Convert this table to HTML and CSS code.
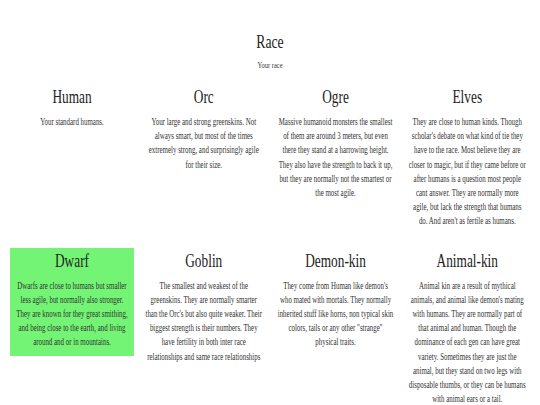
FILE: index.html
```html
<!DOCTYPE html>
<html>
<head>
<meta charset="utf-8">
<link rel="stylesheet" href="styles.css">
</head>
<body>
<div class="frame">
<div class="page">
  <header class="head">
    <h1 class="title">Race</h1>
    <p class="subtitle">Your race</p>
  </header>
  <section class="grid">
    <div class="card">
      <h2 class="name">Human</h2>
      <p class="desc">Your standard humans.</p>
    </div>
    <div class="card">
      <h2 class="name">Orc</h2>
      <p class="desc">Your large and strong greenskins. Not always smart, but most of the times extremely strong, and surprisingly agile for their size.</p>
    </div>
    <div class="card">
      <h2 class="name">Ogre</h2>
      <p class="desc">Massive humanoid monsters the smallest of them are around 3 meters, but even there they stand at a harrowing height. They also have the strength to back it up, but they are normally not the smartest or the most agile.</p>
    </div>
    <div class="card">
      <h2 class="name">Elves</h2>
      <p class="desc">They are close to human kinds. Though scholar's debate on what kind of tie they have to the race. Most believe they are closer to magic, but if they came before or after humans is a question most people cant answer. They are normally more agile, but lack the strength that humans do. And aren't as fertile as humans.</p>
    </div>
    <div class="card selected">
      <h2 class="name">Dwarf</h2>
      <p class="desc">Dwarfs are close to humans but smaller less agile, but normally also stronger. They are known for they great smithing, and being close to the earth, and living around and or in mountains.</p>
    </div>
    <div class="card">
      <h2 class="name">Goblin</h2>
      <p class="desc">The smallest and weakest of the greenskins. They are normally smarter than the Orc's but also quite weaker. Their biggest strength is their numbers. They have fertility in both inter race relationships and same race relationships</p>
    </div>
    <div class="card">
      <h2 class="name">Demon-kin</h2>
      <p class="desc">They come from Human like demon's who mated with mortals. They normally inherited stuff like horns, non typical skin colors, tails or any other "strange" physical traits.</p>
    </div>
    <div class="card">
      <h2 class="name">Animal-kin</h2>
      <p class="desc">Animal kin are a result of mythical animals, and animal like demon's mating with humans. They are normally part of that animal and human. Though the dominance of each gen can have great variety. Sometimes they are just the animal, but they stand on two legs with disposable thumbs, or they can be humans with animal ears or a tail.</p>
    </div>
  </section>
</div>
</div>
</body>
</html>
```

FILE: styles.css
```css
html, body {
  margin: 0;
  padding: 0;
  background: #ffffff;
  overflow: hidden;
}
body {
  width: 540px;
  height: 405px;
  font-family: "Liberation Serif", "Times New Roman", serif;
  color: #222;
}
.frame {
  width: 540px;
  height: 405px;
  overflow: clip;
}
.page {
  width: 750px;
  transform: scaleX(0.72);
  transform-origin: 0 0;
  padding-top: 31px;
}
.head {
  text-align: center;
}
.title {
  margin: 0;
  font-size: 19px;
  line-height: 22px;
  font-weight: normal;
  color: #222;
}
.subtitle {
  margin: 6px 0 0;
  font-size: 9px;
  line-height: 12px;
  color: #333;
}
.grid {
  display: grid;
  grid-template-columns: repeat(4, 172px);
  column-gap: 11px;
  row-gap: 13px;
  padding: 0 14px;
  margin-top: 13px;
  align-items: start;
}
.card {
  text-align: center;
  padding: 2px 4.15px 6px;
}
.card.selected {
  background: #74f474;
}
.name {
  margin: 0;
  font-size: 18.5px;
  line-height: 22px;
  font-weight: normal;
  color: #222;
}
.desc {
  margin: 7px 0 0;
  font-size: 9.6px;
  line-height: 14.2px;
  color: #333;
}
```
